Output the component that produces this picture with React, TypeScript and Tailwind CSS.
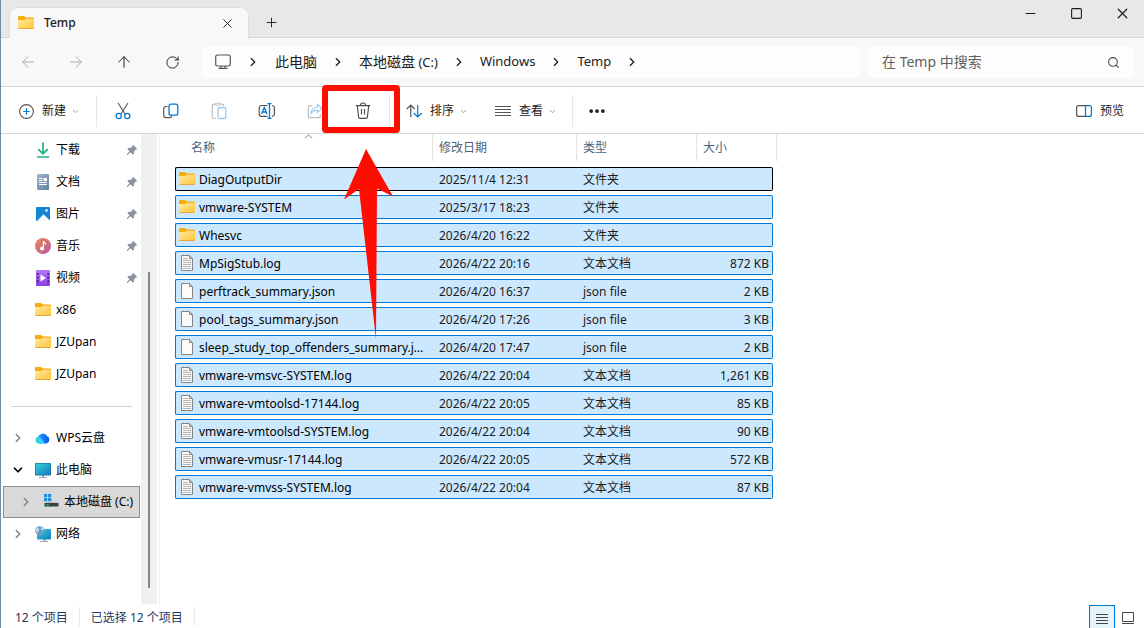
import { useState } from "react";
import type { ReactNode } from "react";
import {
  ArrowLeft, ArrowRight, ArrowUp, ChevronDown, ChevronRight, ChevronUp, Ellipsis, Minus, Plus, RotateCw, Search, Square, X,
} from "lucide-react";

type FileKind = "folder" | "log" | "json";

const FILES: { name: string; date: string; kind: FileKind; size?: string }[] = [
  { name: "DiagOutputDir", date: "2025/11/4 12:31", kind: "folder" },
  { name: "vmware-SYSTEM", date: "2025/3/17 18:23", kind: "folder" },
  { name: "Whesvc", date: "2026/4/20 16:22", kind: "folder" },
  { name: "MpSigStub.log", date: "2026/4/22 20:16", kind: "log", size: "872 KB" },
  { name: "perftrack_summary.json", date: "2026/4/20 16:37", kind: "json", size: "2 KB" },
  { name: "pool_tags_summary.json", date: "2026/4/20 17:26", kind: "json", size: "3 KB" },
  { name: "sleep_study_top_offenders_summary.json", date: "2026/4/20 17:47", kind: "json", size: "2 KB" },
  { name: "vmware-vmsvc-SYSTEM.log", date: "2026/4/22 20:04", kind: "log", size: "1,261 KB" },
  { name: "vmware-vmtoolsd-17144.log", date: "2026/4/22 20:05", kind: "log", size: "85 KB" },
  { name: "vmware-vmtoolsd-SYSTEM.log", date: "2026/4/22 20:04", kind: "log", size: "90 KB" },
  { name: "vmware-vmusr-17144.log", date: "2026/4/22 20:05", kind: "log", size: "572 KB" },
  { name: "vmware-vmvss-SYSTEM.log", date: "2026/4/22 20:04", kind: "log", size: "87 KB" },
];

const KIND_LABEL: Record<FileKind, string> = {
  folder: "文件夹",
  log: "文本文档",
  json: "json file",
};

function FolderIcon() {
  return (
    <svg width="16" height="16" viewBox="0 0 16 16" className="shrink-0">
      <defs>
        <linearGradient id="folder" x1="0" y1="0" x2="1" y2="1">
          <stop offset="0" stopColor="#ffe9a6" />
          <stop offset="1" stopColor="#ffc833" />
        </linearGradient>
      </defs>
      <path d="M0 2.300A1.300 1.300 0 0 1 1.300 1h4.200c.4 0 .7.1 1 .4L8 2.500h6.800A1.200 1.200 0 0 1 16 3.700V8H0z" fill="#f5ac0c" />
      <path d="M0 5h6c.4 0 .7-.1 1-.4l.9-.9h6.900A1.200 1.200 0 0 1 16 4.900v7.900a1.200 1.200 0 0 1-1.200 1.200H1.200A1.200 1.200 0 0 1 0 12.800z" fill="url(#folder)" />
      <path d="M.4 13.500h15.200" stroke="#e9a63a" strokeWidth="1" />
    </svg>
  );
}

function PageIcon({ lined }: { lined?: boolean }) {
  return (
    <svg width="16" height="16" viewBox="0 0 16 16" className="shrink-0" fill="none">
      <path d="M2.500.5h8l3 3v12h-11z" fill="#fbfbfb" stroke="#858585" />
      <path d="M10.500.5v3h3" stroke="#858585" />
      {lined && <path d="M4 3.500h5M4 5.500h8M4 7.500h8M4 9.500h8M4 11.500h8M4 13.500h8" stroke="#b4b4b4" />}
    </svg>
  );
}

function DownloadIcon() {
  return (
    <svg width="16" height="16" viewBox="0 0 16 16" fill="none" stroke="#1fae87" strokeWidth="1.700">
      <path d="M8 .5v11M3.300 7.200 8 11.800l4.700-4.600M2 15h12" />
    </svg>
  );
}

function DocumentsIcon() {
  return (
    <svg width="16" height="16" viewBox="0 0 16 16">
      <defs>
        <linearGradient id="docs" x1="0" y1="0" x2="1" y2="1">
          <stop offset="0" stopColor="#a3b6ca" />
          <stop offset="1" stopColor="#5c7fa3" />
        </linearGradient>
      </defs>
      <rect x="2" y="0" width="12" height="16" rx="1" fill="url(#docs)" />
      <path d="M4 4.500h3.500M4 6.500h3.500M4 8.500h8M4 10.500h8" stroke="#fff" />
      <rect x="8.500" y="4" width="3.500" height="3" fill="#fff" />
    </svg>
  );
}

function PicturesIcon() {
  return (
    <svg width="16" height="16" viewBox="0 0 16 16">
      <rect x="1" y="1" width="14" height="14" rx="1" fill="#1286d4" />
      <path d="M2 15l6.500-6.800L15 14.500V15z" fill="#f2f9ff" />
      <circle cx="11.500" cy="4.500" r="1.400" fill="#cdeafc" />
    </svg>
  );
}

function MusicIcon() {
  return (
    <svg width="16" height="16" viewBox="0 0 16 16">
      <defs>
        <linearGradient id="music" x1="0" y1="0" x2="1" y2="1">
          <stop offset="0" stopColor="#ee8757" />
          <stop offset="1" stopColor="#ae5b9f" />
        </linearGradient>
      </defs>
      <circle cx="8" cy="8" r="8" fill="url(#music)" />
      <circle cx="7" cy="10.500" r="1.900" fill="#fff" />
      <path d="M8.400 10.500V3.200c.3 1.500 2.500 1.400 2.500 3.300" stroke="#fff" strokeWidth="1.200" fill="none" />
    </svg>
  );
}

function VideosIcon() {
  return (
    <svg width="16" height="16" viewBox="0 0 16 16">
      <defs>
        <linearGradient id="videos" x1="0" y1="0" x2="0" y2="1">
          <stop offset="0" stopColor="#b07af5" />
          <stop offset="1" stopColor="#8a3fe0" />
        </linearGradient>
      </defs>
      <rect x="1" y="0" width="14" height="16" rx="1" fill="url(#videos)" />
      <path d="M2.800 3v11M13.200 3v11" stroke="#4a1690" strokeWidth="1.500" strokeDasharray="2 1.500" />
      <path d="M5.500 4.500v7L11 8z" fill="#fff" />
    </svg>
  );
}

function PinIcon() {
  return (
    <svg width="12" height="12" viewBox="0 0 12 12" className="shrink-0" fill="#87919b">
      <path d="M7 .7 11.300 5l-1.200.6-.4 0-1.800 1.900.2 2.100-1.100 1.100-2.500-2.500L1.200 11.200l-.6-.6 3-3.300L1.300 4.900l1.100-1.100 2.100.2 1.900-1.800V1.700z" />
    </svg>
  );
}

function CloudIcon() {
  return (
    <svg width="16" height="16" viewBox="0 0 16 16">
      <defs>
        <linearGradient id="cloud" x1="0" y1="0" x2="1" y2="0">
          <stop offset="0" stopColor="#21b4f5" />
          <stop offset="1" stopColor="#0d4ff0" />
        </linearGradient>
      </defs>
      <path d="M4.500 13.500A3.400 3.400 0 0 1 3 7a5 5 0 0 1 9-1 4 4 0 0 1-.500 7.500z" fill="url(#cloud)" />
      <path d="M4.500 13.500A3.400 3.400 0 0 1 3.500 6.700c2.500.5 4 3 6 6.800z" fill="#30d3ee" />
    </svg>
  );
}

function MonitorIcon() {
  return (
    <svg width="16" height="16" viewBox="0 0 16 16">
      <defs>
        <linearGradient id="monitor" x1="0" y1="0" x2="1" y2="1">
          <stop offset="0" stopColor="#34d2de" />
          <stop offset="1" stopColor="#1279bd" />
        </linearGradient>
      </defs>
      <path d="M7 13h2v2H7zM4 15h8v1H4z" fill="#98a6b0" />
      <rect x="0" y="1" width="16" height="12.500" rx="1" fill="#14709c" />
      <rect x=".7" y="1.700" width="14.600" height="11" fill="url(#monitor)" />
    </svg>
  );
}

function DriveIcon() {
  return (
    <svg width="16" height="16" viewBox="0 0 16 16">
      <path d="M1 0h3.300v3.300H1zM5 0h3.300v3.300H5zM1 4h3.300v3.300H1zM5 4h3.300v3.300H5z" fill="#1492e6" />
      <path d="M3 8h11l1.500 2h-14z" fill="#b9bcc0" />
      <rect x="1.500" y="9" width="14" height="3.500" fill="#3b4045" />
      <path d="M3 10.800h3" stroke="#35d06a" />
    </svg>
  );
}

function NetworkIcon() {
  return (
    <svg width="16" height="16" viewBox="0 0 16 16">
      <path d="M8.500 13h2v2h-2zM5 15h8v1H5z" fill="#98a6b0" />
      <rect x="2" y="3" width="14" height="10.500" rx="1" fill="url(#monitor)" />
      <circle cx="4.800" cy="4.800" r="4.600" fill="#6b9fc2" />
      <path d="M1 3.500C2.500 1 4 2 4 3.500S2.500 5 3 7C1.500 6.500.5 5 1 3.500zM6 1c1.500.5 2.500 1.500 2.800 3L6.500 4z" fill="#c6e0ee" />
    </svg>
  );
}

function SideItem({ icon, label, pinned, chevron, open, active }: {
  icon: ReactNode; label: string; pinned?: boolean; chevron?: boolean; open?: boolean; active?: boolean;
}) {
  return (
    <a
      href="#"
      className={`flex items-center h-8 text-xs text-black ${active ? "mr-px ml-[2px] pl-[15px] bg-[#d9d9d9] border border-[#8c8c8c]" : "pl-[10px]"}`}
    >
      <span className="w-6 shrink-0 text-[#808080]">
        {chevron && !open && <ChevronRight size={14} strokeWidth={2.500} />}
        {chevron && open && <ChevronDown size={14} strokeWidth={3} className="text-black" />}
      </span>
      {icon}
      <span className="pl-[5px] flex-1 whitespace-nowrap">{label}</span>
      {pinned && <span className="pr-[3px]"><PinIcon /></span>}
    </a>
  );
}

function ToolButton({ label, children }: { label: string; children: ReactNode }) {
  return (
    <button aria-label={label} className="w-12 h-8 flex items-center justify-center rounded hover:bg-black/5">
      {children}
    </button>
  );
}

function Crumb({ children }: { children: ReactNode }) {
  return (
    <>
      <a href="#" className="whitespace-nowrap">{children}</a>
      <ChevronRight size={14} strokeWidth={2} className="mx-[14px] shrink-0" />
    </>
  );
}

function Divider() {
  return <span className="w-px h-8 bg-[#e5e5e5] shrink-0" />;
}

export default function App() {
  const [query, setQuery] = useState("");

  return (
    <div className="min-h-screen flex flex-col bg-white border-l border-[#6f8ba6] text-[#1b1b1b] font-['Noto_Sans','Noto_Sans_CJK_SC',sans-serif]">
      <header className="flex items-end h-[38px] bg-[#e8e8e8] shadow-[inset_0_-1px_#d6d6d6]">
        <div className="flex items-center w-60 h-[31px] ml-2 pl-2 pr-[13px] rounded-t-lg bg-[#f8f8f8] border-x border-t border-[#dedede]">
          <FolderIcon />
          <span className="pl-[10px] flex-1 text-xs font-medium">Temp</span>
          <button aria-label="关闭标签页"><X size={15} strokeWidth={1.500} /></button>
        </div>
        <button aria-label="新标签页" className="self-center pt-[7px] ml-[15px]"><Plus size={15} strokeWidth={1.500} /></button>
        <div className="flex self-start ml-auto -mr-px">
          <button aria-label="最小化" className="w-[46px] h-[27px] flex items-center justify-center"><Minus size={15} strokeWidth={1.700} /></button>
          <button aria-label="最大化" className="w-[46px] h-[27px] flex items-center justify-center"><Square size={13} strokeWidth={2} /></button>
          <button aria-label="关闭" className="w-[46px] h-[27px] flex items-center justify-center"><X size={17} strokeWidth={1.700} /></button>
        </div>
      </header>

      <div className="flex items-center h-[49px] pl-[3px] pr-[10px] bg-[#f8f8f8] border-b border-[#d6d6d6]">
        <button aria-label="后退" className="w-12 flex justify-center text-[#a6a6a6]"><ArrowLeft size={18} strokeWidth={1.300} /></button>
        <button aria-label="前进" className="w-12 flex justify-center text-[#a6a6a6]"><ArrowRight size={18} strokeWidth={1.300} /></button>
        <button aria-label="向上" className="w-12 flex justify-center"><ArrowUp size={18} strokeWidth={1.300} /></button>
        <button aria-label="刷新" className="w-12 flex justify-center"><RotateCw size={15} strokeWidth={1.500} /></button>
        <nav className="flex items-center flex-1 h-8 ml-[6px] pl-[13px] rounded-md bg-[#fdfdfd] text-[13px]">
          <svg width="16" height="16" viewBox="0 0 16 16" fill="none" stroke="#555" strokeWidth="1.200" className="shrink-0">
            <rect x=".7" y="1" width="14.600" height="11" rx="1.800" />
            <path d="M6 12v2M10 12v2M3.500 14.400h9" />
          </svg>
          <ChevronRight size={14} strokeWidth={2} className="mx-[15px] shrink-0" />
          <Crumb><span className="text-sm">此电脑</span></Crumb>
          <Crumb><span className="text-sm">本地磁盘</span> (C:)</Crumb>
          <Crumb>Windows</Crumb>
          <Crumb>Temp</Crumb>
        </nav>
        <label className="flex items-center w-[266px] h-8 ml-2 px-[14px] rounded-md bg-[#fdfdfd]">
          <input
            value={query}
            onChange={e => setQuery(e.target.value)}
            placeholder="在 Temp 中搜索"
            aria-label="在 Temp 中搜索"
            className="flex-1 min-w-0 text-sm placeholder:text-[#606060] focus:outline-none"
          />
          <Search size={13} strokeWidth={2} className="text-[#444]" />
        </label>
      </div>

      <div className="flex items-center h-[47px] pt-[2px] pr-5 border-b border-[#d6d6d6] text-xs">
        <button className="flex items-center w-[95px] pl-[18px]">
          <svg width="15" height="15" viewBox="0 0 15 15" fill="none">
            <circle cx="7.500" cy="7.500" r="6.900" stroke="#555" strokeWidth="1.100" />
            <path d="M7.500 4.300v6.400M4.300 7.500h6.400" stroke="#0078d4" strokeWidth="1.200" />
          </svg>
          <span className="pl-2 pr-[5px]">新建</span>
          <ChevronDown size={9} className="text-[#808080]" />
        </button>
        <Divider />
        <div className="flex pl-[2px] pr-[2px]">
          <ToolButton label="剪切">
            <svg width="16" height="18" viewBox="0 0 16 18" fill="none">
              <path d="M3 1l7.300 11.300M13 1L5.700 12.300" stroke="#555" strokeWidth="1.100" />
              <circle cx="3.700" cy="14" r="2.600" stroke="#0078d4" strokeWidth="1.300" />
              <circle cx="12.300" cy="14" r="2.600" stroke="#0078d4" strokeWidth="1.300" />
            </svg>
          </ToolButton>
          <ToolButton label="复制">
            <svg width="16" height="16" viewBox="0 0 16 16" fill="none">
              <path d="M4.500 3.500H3A2.300 2.300 0 0 0 .7 5.800v6.500A2.300 2.300 0 0 0 3 14.600h3.500a2.300 2.300 0 0 0 2.300-1.800" stroke="#555" strokeWidth="1.200" />
              <rect x="6" y="1.200" width="8.800" height="11" rx="2" stroke="#0078d4" strokeWidth="1.300" />
            </svg>
          </ToolButton>
          <ToolButton label="粘贴">
            <svg width="16" height="18" viewBox="0 0 16 18" fill="none">
              <path d="M5 16.500H3A1.800 1.800 0 0 1 1.200 14.700V4A1.800 1.800 0 0 1 3 2.200h1.500M9.500 2.200H11A1.800 1.800 0 0 1 12.800 4" stroke="#bcbcbc" strokeWidth="1.200" />
              <rect x="4.500" y="1.200" width="5" height="2" rx="1" stroke="#bcbcbc" />
              <rect x="7" y="5.500" width="7.800" height="11" rx="1.600" stroke="#9ccbee" strokeWidth="1.300" />
            </svg>
          </ToolButton>
          <ToolButton label="重命名">
            <svg width="18" height="16" viewBox="0 0 18 16" fill="none">
              <path d="M9.500 2.500H3.500A2.300 2.300 0 0 0 1.200 4.800v6.200a2.300 2.300 0 0 0 2.300 2.300h6M14 2.500a2.300 2.300 0 0 1 2.400 2.300v6.200a2.300 2.300 0 0 1-2.400 2.300" stroke="#555" strokeWidth="1.200" />
              <path d="M3.500 11L6.300 4.500 9 11M4.500 9h3.600M11.500.7v14.600M9.500.7h4M9.500 15.300h4" stroke="#0078d4" strokeWidth="1.300" />
            </svg>
          </ToolButton>
          <ToolButton label="共享">
            <svg width="16" height="16" viewBox="0 0 16 16" fill="none">
              <path d="M5.500 2.700H3.300A2 2 0 0 0 1.300 4.700v8A2 2 0 0 0 3.300 14.700h8a2 2 0 0 0 2-2v-1.500" stroke="#bcbcbc" strokeWidth="1.200" />
              <path d="M10.500 1.500L15 5.500l-4.500 4V7.200C7.500 7 5.500 8.300 4 10.500 4.300 7 6.500 4.200 10.500 4z" stroke="#9ccbee" strokeWidth="1.200" />
            </svg>
          </ToolButton>
          <div className="relative">
            <ToolButton label="删除">
              <svg width="16" height="18" viewBox="0 0 16 18" fill="none" stroke="#484848" strokeWidth="1.100">
                <path d="M.8 3.600h14.400M5.500 3.500a2.500 2.500 0 0 1 5 0M2.300 3.700l1.300 11.200a1.600 1.600 0 0 0 1.600 1.500h5.600a1.600 1.600 0 0 0 1.600-1.500l1.300-11.200M6.500 7v5.500M9.500 7v5.500" />
              </svg>
            </ToolButton>
            {/* red callout round the delete button */}
            <div className="absolute z-10 -left-[17px] -top-[10px] w-[78px] h-12 rounded border-[6px] border-[#ff0d00] pointer-events-none" />
            <svg width="50" height="192" viewBox="0 0 50 192" className="absolute z-10 left-[5px] top-[54px] pointer-events-none">
              <path d="M22 0L49 47.500L33 39.500L32 190L15 40L0 50.500z" fill="#ff0d00" />
            </svg>
          </div>
        </div>
        <Divider />
        <button className="flex items-center pl-4">
          <svg width="17" height="16" viewBox="0 0 17 16" fill="none" strokeWidth="1.200">
            <path d="M4.800 14V2M.8 6l4-4 4 4" stroke="#555" />
            <path d="M11.700 2v12M7.700 10l4 4 4-4" stroke="#0078d4" />
          </svg>
          <span className="pl-[7px] pr-[5px]">排序</span>
          <ChevronDown size={9} className="text-[#808080]" />
        </button>
        <button className="flex items-center pl-[27px] pr-[15px]">
          <svg width="16" height="12" viewBox="0 0 16 12" stroke="#555">
            <path d="M0 1.500h16M0 4.500h16M0 7.500h16M0 10.500h16" />
          </svg>
          <span className="pl-2 pr-[5px]">查看</span>
          <ChevronDown size={9} className="text-[#808080]" />
        </button>
        <Divider />
        <ToolButton label="更多"><Ellipsis size={20} strokeWidth={2.500} /></ToolButton>
        <button className="flex items-center ml-auto">
          <svg width="16" height="12" viewBox="0 0 16 12" fill="none">
            <path d="M9.500.6H2.600a2 2 0 0 0-2 2v6.800a2 2 0 0 0 2 2h6.900" stroke="#555" strokeWidth="1.200" />
            <path d="M9.500.6h3.900a2 2 0 0 1 2 2v6.800a2 2 0 0 1-2 2H9.500z" stroke="#0078d4" strokeWidth="1.200" />
          </svg>
          <span className="pl-2">预览</span>
        </button>
      </div>

      <main className="flex flex-1">
        <nav className="w-[140px] shrink-0">
          <SideItem icon={<DownloadIcon />} label="下载" pinned />
          <SideItem icon={<DocumentsIcon />} label="文档" pinned />
          <SideItem icon={<PicturesIcon />} label="图片" pinned />
          <SideItem icon={<MusicIcon />} label="音乐" pinned />
          <SideItem icon={<VideosIcon />} label="视频" pinned />
          <SideItem icon={<FolderIcon />} label="x86" />
          <SideItem icon={<FolderIcon />} label="JZUpan" />
          <SideItem icon={<FolderIcon />} label="JZUpan" />
          <hr className="my-4 -mb-px ml-[10px] mr-[9px] border-[#d4d4d4]" />
          <div className="pt-4">
            <SideItem icon={<CloudIcon />} label="WPS云盘" chevron />
            <SideItem icon={<MonitorIcon />} label="此电脑" chevron open />
            <SideItem icon={<DriveIcon />} label="本地磁盘 (C:)" chevron active />
            <SideItem icon={<NetworkIcon />} label="网络" chevron />
          </div>
        </nav>
        <div className="flex flex-col items-center w-4 pt-[138px] pb-4 bg-[#f0f0f0]">
          <span className="w-[2px] flex-1 bg-[#858585]" />
        </div>

        <section className="flex-1 ml-[2px] pl-[15px] border-l border-[#f0f0f0]">
          <table className="-mt-1 w-[602px] table-fixed border-separate border-spacing-x-0 border-spacing-y-1 text-xs">
            <colgroup>
              <col className="w-[258px]" />
              <col className="w-36" />
              <col className="w-[120px]" />
              <col className="w-[76px]" />
              <col className="w-1" />
            </colgroup>
            <thead className="text-left text-[#4c607a]">
              <tr className="h-[29px]">
                <th className="relative p-0 align-top font-normal">
                  <div className="h-[27px] pl-4 leading-[27px] border-r border-[#e2e2e2]">名称</div>
                  <ChevronUp size={13} strokeWidth={1.500} className="absolute left-[127px] -top-1 text-[#606060]" />
                </th>
                <th className="p-0 align-top font-normal"><div className="h-[27px] pl-[6px] leading-[27px] border-r border-[#e2e2e2]">修改日期</div></th>
                <th className="p-0 align-top font-normal"><div className="h-[27px] pl-[6px] leading-[27px] border-r border-[#e2e2e2]">类型</div></th>
                <th colSpan={2} className="p-0 align-top font-normal"><div className="h-[27px] pl-[6px] leading-[27px] border-r border-[#e2e2e2]">大小</div></th>
              </tr>
            </thead>
            <tbody>
              {FILES.map((f, i) => {
                const edge = i === 0 ? "border-black" : "border-[#0078d4]";
                return (
                  <tr key={f.name} className="h-6">
                    <td className={`p-0 pl-[3px] border-y border-l rounded-l-xs bg-[#cce8ff] text-black ${edge}`}>
                      <div className="flex items-center">
                        {f.kind === "folder" ? <FolderIcon /> : <PageIcon lined={f.kind === "log"} />}
                        <span className="pt-[2px] pl-1 pr-[7px] truncate">{f.name}</span>
                      </div>
                    </td>
                    <td className={`p-0 pt-[2px] pl-[6px] border-y bg-[#cce8ff] ${edge}`}>{f.date}</td>
                    <td className={`p-0 pt-[2px] pl-[6px] border-y bg-[#cce8ff] ${edge}`}>{KIND_LABEL[f.kind]}</td>
                    <td className={`p-0 pt-[2px] pr-[3px] border-y border-r rounded-r-xs bg-[#cce8ff] text-right ${edge}`}>{f.size}</td>
                  </tr>
                );
              })}
            </tbody>
          </table>
        </section>
      </main>

      <footer className="flex items-center h-6 pl-[14px] text-xs text-[#1e395b]">
        <span className="pt-[3px] pr-[11px] border-r border-[#e8e8e8]">12 个项目</span>
        <span className="pt-[3px] px-[11px] border-r border-[#e8e8e8]">已选择 12 个项目</span>
        <div className="flex items-center ml-auto pr-[6px] gap-[3px] self-stretch">
          <button aria-label="详细信息" className="flex items-center justify-center w-[26px] mt-px self-stretch border border-b-0 border-[#0078d4] bg-[#e5f3fb]">
            <svg width="12" height="12" viewBox="0 0 12 12" stroke="#444" className="mt-1">
              <path d="M0 1.500h12M0 4.500h12M0 7.500h12M0 10.500h12" />
            </svg>
          </button>
          <button aria-label="大图标" className="flex items-center justify-center w-5">
            <svg width="12" height="12" viewBox="0 0 12 12" fill="none" stroke="#444" className="mt-1">
              <path d="M.5.500h11v9H.5zM0 11.500h12" />
            </svg>
          </button>
        </div>
      </footer>
    </div>
  );
}
